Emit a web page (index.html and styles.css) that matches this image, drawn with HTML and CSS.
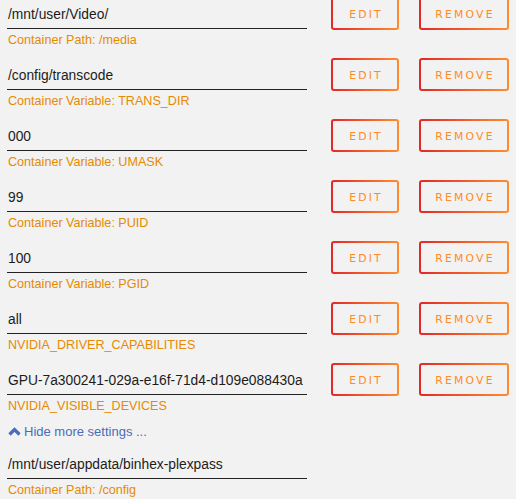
FILE: index.html
```html
<!DOCTYPE html>
<html>
<head>
<meta charset="utf-8">
<link rel="stylesheet" href="styles.css">
</head>
<body>
<div class="list">
  <div class="row">
    <div class="field"><div class="value">/mnt/user/Video/</div><div class="label">Container Path: /media</div></div>
    <div class="actions"><button class="btn edit">EDIT</button><button class="btn remove">REMOVE</button></div>
  </div>
  <div class="row">
    <div class="field"><div class="value">/config/transcode</div><div class="label">Container Variable: TRANS_DIR</div></div>
    <div class="actions"><button class="btn edit">EDIT</button><button class="btn remove">REMOVE</button></div>
  </div>
  <div class="row">
    <div class="field"><div class="value">000</div><div class="label">Container Variable: UMASK</div></div>
    <div class="actions"><button class="btn edit">EDIT</button><button class="btn remove">REMOVE</button></div>
  </div>
  <div class="row">
    <div class="field"><div class="value">99</div><div class="label">Container Variable: PUID</div></div>
    <div class="actions"><button class="btn edit">EDIT</button><button class="btn remove">REMOVE</button></div>
  </div>
  <div class="row">
    <div class="field"><div class="value">100</div><div class="label">Container Variable: PGID</div></div>
    <div class="actions"><button class="btn edit">EDIT</button><button class="btn remove">REMOVE</button></div>
  </div>
  <div class="row">
    <div class="field"><div class="value">all</div><div class="label">NVIDIA_DRIVER_CAPABILITIES</div></div>
    <div class="actions"><button class="btn edit">EDIT</button><button class="btn remove">REMOVE</button></div>
  </div>
  <div class="row">
    <div class="field"><div class="value">GPU-7a300241-029a-e16f-71d4-d109e088430a</div><div class="label">NVIDIA_VISIBLE_DEVICES</div></div>
    <div class="actions"><button class="btn edit">EDIT</button><button class="btn remove">REMOVE</button></div>
  </div>
  <div class="toggle">
    <svg class="chev" width="13" height="9" viewBox="0 0 13 9"><polyline points="1.5,7.5 6.5,2.5 11.5,7.5" fill="none" stroke="#486dba" stroke-width="3.2"/></svg>
    <span>Hide more settings ...</span>
  </div>
  <div class="row">
    <div class="field"><div class="value">/mnt/user/appdata/binhex-plexpass</div><div class="label">Container Path: /config</div></div>
  </div>
</div>
</body>
</html>
```
FILE: styles.css
```css
html, body {
  margin: 0;
  padding: 0;
  background: #f2f2f2;
}
body {
  font-family: "Liberation Sans", Arial, sans-serif;
  overflow: hidden;
}
.list {
  display: flex;
  flex-direction: column;
  margin-top: -3px;
  padding-left: 7px;
}
.row {
  display: flex;
  align-items: flex-start;
  height: 61px;
}
.field {
  width: 300px;
  flex: none;
}
.value {
  font-size: 13.8px;
  line-height: 17px;
  color: #1c1c1c;
  padding: 9px 0 5px 1px;
  border-bottom: 1px solid #222;
  white-space: nowrap;
}
.label {
  font-size: 12.6px;
  line-height: 15px;
  color: #e68a00;
  margin-top: 4px;
  padding-left: 1px;
  white-space: nowrap;
}
.actions {
  display: flex;
  gap: 20px;
  margin-left: 24px;
}
.btn {
  box-sizing: border-box;
  height: 33px;
  border: 2px solid transparent;
  border-radius: 3px;
  background:
    linear-gradient(#f2f2f2, #f2f2f2) padding-box,
    linear-gradient(90deg, #e22828, #ff8c2f) border-box;
  color: #ff8a2a;
  font-family: "DejaVu Sans", sans-serif;
  font-size: 10.8px;
  font-weight: normal;
  letter-spacing: 2.2px;
  padding: 2px 0 0 2px;
  cursor: pointer;
}
.edit { width: 68px; }
.remove { width: 90px; }
.toggle {
  display: flex;
  align-items: center;
  gap: 3px;
  height: 23px;
  padding-bottom: 8px;
  box-sizing: border-box;
  color: #486dba;
  font-size: 13px;
  line-height: 15px;
  padding-left: 1px;
}
.chev { flex: none; }
```
